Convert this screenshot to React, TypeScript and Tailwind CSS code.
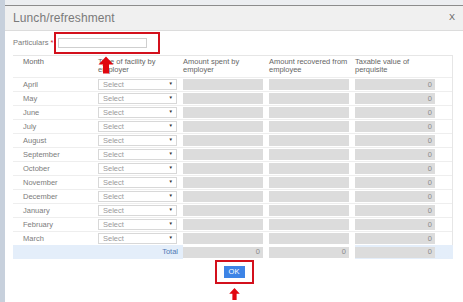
const MONTHS = [
  'April', 'May', 'June', 'July', 'August', 'September',
  'October', 'November', 'December', 'January', 'February', 'March',
];

// column widths (px) for the perquisite grid
const COLS = 'grid grid-cols-[82px_85px_86px_86px_101px]';

function UpArrow({ className }: { className?: string }) {
  return (
    <svg className={className} width="16" height="17" viewBox="0 0 16 17">
      <path d="M8 0 L15.5 8 L11 8 L11 17 L5 17 L5 8 L0.5 8 Z" fill="#e0060f" />
    </svg>
  );
}

function GrayBox({ value }: { value?: string }) {
  return (
    <div className="w-[80px] h-[11px] bg-[#dcdcdc] flex items-center justify-end pr-[3px] text-[7.5px] leading-none text-[#8a8a8a]">
      {value}
    </div>
  );
}

export default function App() {
  return (
    <div
      className="relative w-[463px] h-[302px] flex bg-[#eceef1] overflow-hidden"
      style={{ fontFamily: '"Liberation Sans", Arial, sans-serif' }}
    >
      <div className="w-[5px] bg-[#c7d0dc] flex-shrink-0" />

      <div className="flex-1 mt-[5px] bg-white border-t border-[#8c8c8c] flex flex-col">
        {/* Header */}
        <div className="h-[25px] bg-[#f0f0f0] border-b border-[#dcdcdc] flex items-center justify-between pl-[8px] pr-[8px]">
          <h1 className="text-[12px] text-[#7a7a7a] tracking-[0.1px]">Lunch/refreshment</h1>
          <span className="text-[9px] text-[#666]">X</span>
        </div>

        <div className="pl-[8px]">
          {/* Particulars */}
          <div className="h-[24px] flex items-center">
            <span className="text-[7.5px] text-[#7a7a7a]">
              Particulars <span className="text-[#d9202a]">*</span>
            </span>
            <div className="ml-[1px] border-2 border-[#d3101c] pl-[2px] pr-[11px] py-[4px]">
              <div className="w-[89px] h-[10px] border border-[#cfcfcf] bg-white" />
            </div>
          </div>

          {/* Table */}
          <div className="w-[440px] border-t border-r border-[#e6e6e6] text-[7.5px]">
            <div className={`${COLS} h-[21px] text-[#666] leading-[8px] pt-[2px]`}>
              <div className="pl-[10px]">Month</div>
              <div className="pl-[3px]">Type of facility by<br />employer</div>
              <div className="pl-[3px]">Amount spent by<br />employer</div>
              <div className="pl-[3px]">Amount recovered from<br />employee</div>
              <div className="pl-[3px]">Taxable value of<br />perquisite</div>
            </div>

            {MONTHS.map((m) => (
              <div key={m} className={`${COLS} h-[14px] items-center border-t border-[#eeeeee]`}>
                <div className="pl-[10px] text-[#7c7c7c]">{m}</div>
                <div className="pl-[3px]">
                  <div className="w-[79px] h-[11px] border border-[#d8d8d8] bg-white flex items-center justify-between pl-[4px] pr-[3px] text-[#9a9a9a]">
                    <span>Select</span>
                    <span className="text-[4.5px] text-[#333]">▼</span>
                  </div>
                </div>
                <div className="pl-[3px]"><GrayBox /></div>
                <div className="pl-[3px]"><GrayBox /></div>
                <div className="pl-[3px]"><GrayBox value="0" /></div>
              </div>
            ))}

            <div className={`${COLS} h-[14px] items-center bg-[#e4eefa]`}>
              <div className="col-span-2 text-right pr-[2px] text-[#4f79b4]">Total</div>
              <div className="pl-[3px] h-full flex items-center bg-gradient-to-r from-[#e4eefa] from-[3px] to-white to-[3px]"><GrayBox value="0" /></div>
              <div className="pl-[3px] h-full flex items-center bg-white"><GrayBox value="0" /></div>
              <div className="pl-[3px] h-full flex items-center bg-gradient-to-r from-white from-[3px] to-[#e4eefa] to-[3px]"><GrayBox value="0" /></div>
            </div>
          </div>
        </div>

        {/* OK */}
        <div className="flex flex-col items-center mt-[1px]">
          <div className="border-2 border-[#d3101c] px-[7px] py-[4px]">
            <button className="w-[21px] h-[12px] bg-[#3d84e6] text-white text-[7.5px] leading-none flex items-center justify-center">
              OK
            </button>
          </div>
          <UpArrow className="mt-[4px] w-[15px] h-[12px]" />
        </div>
      </div>

      {/* annotation arrow under Particulars */}
      <UpArrow className="absolute left-[98px] top-[56px] w-[16px] h-[18px]" />
    </div>
  );
}
